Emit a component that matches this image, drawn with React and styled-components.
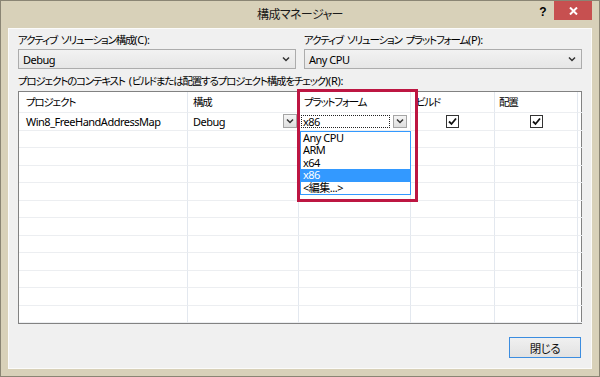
import React from 'react';
import styled, { createGlobalStyle } from 'styled-components';

const FONT = `"Noto Sans", "Noto Sans CJK JP", sans-serif`;

const GlobalStyle = createGlobalStyle`
  html, body { margin: 0; padding: 0; background: #d8d1b9; }
  * { box-sizing: border-box; }
`;

const Window = styled.div`
  width: 600px;
  height: 377px;
  background: #d8d1b9;
  border: 1px solid #8a8574;
  padding: 0 7px 7px;
  display: flex;
  flex-direction: column;
  font-family: ${FONT};
  font-size: 11px;
  letter-spacing: -0.5px;
  font-feature-settings: "palt";
  color: #000;
`;

const TitleBar = styled.div`
  height: 27px;
  display: grid;
  grid-template-columns: 1fr auto 1fr;
  align-items: start;
`;

const Title = styled.div`
  grid-column: 2;
  line-height: 27px;
  font-size: 12px;
  letter-spacing: -0.6px;
  color: #1a1a1a;
`;

const Controls = styled.div`
  grid-column: 3;
  justify-self: end;
  display: flex;
  align-items: flex-start;
  gap: 6px;
`;

const Help = styled.div`
  width: 10px;
  line-height: 22px;
  font-family: "Liberation Sans", sans-serif;
  font-weight: bold;
  font-size: 12px;
  letter-spacing: 0;
  text-align: center;
`;

const Close = styled.div`
  width: 38px;
  height: 19px;
  background: #c75050;
  display: flex;
  align-items: center;
  justify-content: center;
`;

const Client = styled.div`
  flex: 1;
  background: #f0f0f0;
  border: 1px solid #fbfbfa;
  padding: 4px 9px 0;
  display: flex;
  flex-direction: column;
`;

const TopRow = styled.div`
  display: grid;
  grid-template-columns: 1fr 1fr;
  gap: 8px;
`;

const Field = styled.div`
  display: flex;
  flex-direction: column;
  gap: 1px;
`;

const Jp = styled.div`
  font-size: 10.5px;
  letter-spacing: -1.2px;
  word-spacing: 2.5px;
  white-space: nowrap;
  overflow: visible;
`;

const Key = styled.span`
  font-size: 11px;
  letter-spacing: -0.3px;
  line-height: 1;
`;

const Label = styled(Jp)`
  height: 15px;
  line-height: 15px;
`;

const Combo = styled.div`
  height: 20px;
  border: 1px solid #acacac;
  background: linear-gradient(#f2f2f2, #e6e6e6);
  display: flex;
  align-items: center;
  justify-content: space-between;
  padding: 0 5px 0 4px;
`;

const SectionLabel = styled(Jp)`
  margin-top: 5px;
  height: 14px;
  line-height: 14px;
`;

const Table = styled.div`
  position: relative;
  margin-top: 3px;
  height: 233px;
  flex: none;
  border: 1px solid #828282;
  background: #fff;
  display: grid;
  grid-template-columns: 169px 111px 112px 84px 83px 1fr;
  grid-template-rows: 21px repeat(12, 17.5px);
`;

const Cell = styled.div`
  border-right: ${p => (p.$last ? 'none' : '1px solid #e3e8ef')};
  border-bottom: 1px solid #eceef1;
  padding-left: ${p => p.$pad ?? 5}px;
  display: flex;
  align-items: center;
  justify-content: ${p => (p.$center ? 'center' : 'flex-start')};
  white-space: nowrap;
  overflow: hidden;
  min-width: 0;
`;

const HeadCell = styled(Cell)`
  padding-bottom: 1px;
  font-size: 10.5px;
  letter-spacing: -1.2px;
`;

const Spread = styled(Cell)`
  justify-content: space-between;
  padding-right: 1px;
`;

const DropBtn = styled.div`
  width: 14px;
  height: ${p => p.$h ?? 14}px;
  border: 1px solid #a5a5a5;
  background: linear-gradient(#f5f5f5, #dedede);
  display: flex;
  align-items: center;
  justify-content: center;
  flex: none;
`;

const EditCombo = styled(Cell)`
  padding-left: 2px;
  padding-right: 2px;
  gap: 3px;
`;

const EditBox = styled.div`
  width: 89px;
  height: 13px;
  border: 1px dotted #222;
  line-height: 11px;
  padding-left: 1px;
`;

const Check = styled.div`
  width: 13px;
  height: 13px;
  border: 1px solid #333;
  background: #fff;
  display: flex;
  align-items: center;
  justify-content: center;
`;

const DropList = styled.div`
  position: absolute;
  left: 281px;
  top: 38.5px;
  width: 111px;
  border: 1px solid #3399ff;
  background: #fff;
  z-index: 2;
`;

const Option = styled.div`
  height: 12.5px;
  line-height: 12.5px;
  padding-left: 2px;
  white-space: nowrap;
  background: ${p => (p.$sel ? '#3399ff' : 'transparent')};
  color: ${p => (p.$sel ? '#fff' : '#000')};
`;

const Highlight = styled.div`
  position: absolute;
  left: 278px;
  top: -3px;
  width: 121px;
  height: 113px;
  border: 3px solid #bd1642;
  z-index: 3;
  pointer-events: none;
`;

const Footer = styled.div`
  display: flex;
  justify-content: flex-end;
  margin-top: 13px;
  padding-right: 1px;
`;

const Button = styled.div`
  width: 72px;
  height: 21px;
  border: 1px solid #3c8de0;
  background: linear-gradient(#f0f0f0, #e2e2e2);
  display: flex;
  align-items: center;
  justify-content: center;
  font-size: 11.5px;
  letter-spacing: -0.5px;
  color: #111;
`;

const Chevron = () => (
  <svg width="8" height="6" viewBox="0 0 8 6">
    <polyline points="1,1.5 4,4.5 7,1.5" fill="none" stroke="#333" strokeWidth="1.5" />
  </svg>
);

const CheckMark = () => (
  <svg width="9" height="9" viewBox="0 0 9 9">
    <polyline points="1,4.5 3.5,7 8,1.5" fill="none" stroke="#111" strokeWidth="1.8" />
  </svg>
);

const CloseX = () => (
  <svg width="9" height="8" viewBox="0 0 9 8">
    <path d="M1 0.5 L8 7.5 M8 0.5 L1 7.5" stroke="#fff" strokeWidth="2" />
  </svg>
);

const headers = ['プロジェクト', '構成', 'プラットフォーム', 'ビルド', '配置'];

export default function App() {
  const emptyRows = Array.from({ length: 11 });
  return (
    <>
      <GlobalStyle />
      <Window>
        <TitleBar>
          <Title>構成マネージャー</Title>
          <Controls>
            <Help>?</Help>
            <Close><CloseX /></Close>
          </Controls>
        </TitleBar>
        <Client>
          <TopRow>
            <Field>
              <Label>アクティブ ソリューション構成<Key>(C):</Key></Label>
              <Combo><span>Debug</span><Chevron /></Combo>
            </Field>
            <Field>
              <Label>アクティブ ソリューション プラットフォーム<Key>(P):</Key></Label>
              <Combo><span>Any CPU</span><Chevron /></Combo>
            </Field>
          </TopRow>
          <SectionLabel>
            プロジェクトのコンテキスト <Key>(</Key>ビルドまたは配置するプロジェクト構成をチェック<Key>)(R):</Key>
          </SectionLabel>
          <Table>
            {headers.map((h, i) => (
              <HeadCell key={h} $pad={i === 0 ? 7 : i === 4 ? 4 : 5}>{h}</HeadCell>
            ))}
            <HeadCell $last />

            <Cell $pad={7}>Win8_FreeHandAddressMap</Cell>
            <Spread>
              <span>Debug</span>
              <DropBtn><Chevron /></DropBtn>
            </Spread>
            <EditCombo>
              <EditBox>x86</EditBox>
              <DropBtn $h={13}><Chevron /></DropBtn>
            </EditCombo>
            <Cell $center $pad={0}><Check><CheckMark /></Check></Cell>
            <Cell $center $pad={0}><Check><CheckMark /></Check></Cell>
            <Cell $last />

            {emptyRows.map((_, r) => (
              <React.Fragment key={r}>
                <Cell /><Cell /><Cell /><Cell /><Cell /><Cell $last />
              </React.Fragment>
            ))}

            <DropList>
              <Option>Any CPU</Option>
              <Option>ARM</Option>
              <Option>x64</Option>
              <Option $sel>x86</Option>
              <Option>&lt;編集...&gt;</Option>
            </DropList>
            <Highlight />
          </Table>
          <Footer>
            <Button>閉じる</Button>
          </Footer>
        </Client>
      </Window>
    </>
  );
}
